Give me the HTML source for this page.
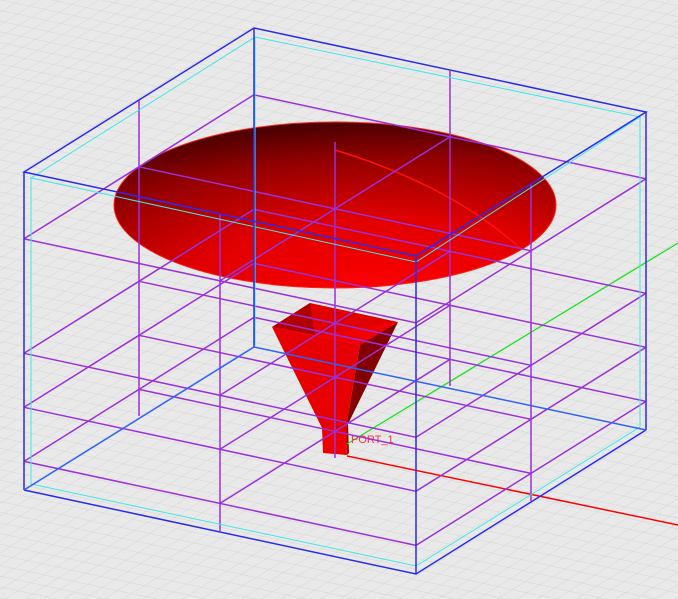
<!DOCTYPE html>
<html><head><meta charset="utf-8"><style>
html,body{margin:0;padding:0;background:#e9e9e9;}
svg{display:block}
</style></head><body>
<svg width="678" height="599" viewBox="0 0 678 599" xmlns="http://www.w3.org/2000/svg">
<defs>
<pattern id="grid" width="15" height="15" patternUnits="userSpaceOnUse" patternTransform="matrix(0.978 0.209 0.85 -0.53 0 0)">
<path d="M0 0H15M0 0V15" stroke="#d2d2d2" stroke-width="1.1" fill="none"/>
</pattern>
<radialGradient id="dish" cx="0.62" cy="1.05" r="1.05" fx="0.62" fy="1.05">
<stop offset="0" stop-color="#ff0000"/>
<stop offset="0.45" stop-color="#e00000"/>
<stop offset="0.8" stop-color="#900000"/>
<stop offset="1" stop-color="#4a0000"/>
</radialGradient>
<g id="lvl" fill="none" stroke="#9a30dc" stroke-width="1.5">
<path vector-effect="non-scaling-stroke" d="M0 0L1 0M0 .5L1 .5M0 1L1 1M0 0L0 1M.5 0L.5 1M1 0L1 1"/>
</g>
</defs>
<rect width="678" height="599" fill="#e9e9e9"/>
<rect width="678" height="599" fill="url(#grid)"/>

<ellipse cx="335" cy="205" rx="221" ry="83" fill="url(#dish)" stroke="#ff2020" stroke-width="1"/>
<path d="M335 150 Q450 185 520 248" stroke="#ff1010" stroke-width="1.5" fill="none"/>

<polygon points="310,303 398,322 360,345 272,327" fill="#e00000"/>
<polygon points="310,303 315,335 272,327" fill="#b00000"/>
<polygon points="315,335 398,322 360,345 272,327" fill="#f00000"/>
<polygon points="272,327 360,345 346,428 322,428" fill="#e60000"/>
<polygon points="360,345 398,322 348,424 346,428" fill="#820000"/>
<polygon points="322,428 346,428 347,455 323,453" fill="#ee0000"/>
<polygon points="346,428 348,424 349,453 347,455" fill="#a00000"/>

<line x1="347" y1="444" x2="678" y2="243" stroke="#20e020" stroke-width="1.3"/>
<line x1="347" y1="456" x2="678" y2="525" stroke="#ff0000" stroke-width="1.5"/>
<text x="351" y="443" font-family="Liberation Sans, sans-serif" font-size="11" fill="#ff3030">PORT_1</text>

<use href="#lvl" transform="translate(0,66.8) matrix(392 84 230 -144 24 172)"/>
<use href="#lvl" transform="translate(0,181.3) matrix(392 84 230 -144 24 172)"/>
<use href="#lvl" transform="translate(0,235.3) matrix(392 84 230 -144 24 172)"/>
<use href="#lvl" transform="translate(0,289.4) matrix(392 84 230 -144 24 172)"/>
<g stroke="#9a30dc" stroke-width="1.5" fill="none">
<path d="M220 214V531M531 184V501M139 100V416M450 71V386M335 142V458"/>
</g>

<g stroke="#40e8e8" stroke-width="1" fill="none">
<path d="M255 37L640 117L416 262L31 178Z"/>
<path d="M31 484L416 566L640 427"/>
<path d="M31 178V484M416 262V566M640 117V427M255 37V345"/>
</g>
<g stroke="#2a2af0" stroke-width="1.5" fill="none">
<path d="M254 28L646 112L416 256L24 172Z"/>
<path d="M24 490L416 574L646 430"/>
<path d="M24 172V490M416 256V574M646 112V430M254 28V347"/>
<path d="M254 347L24 490" stroke="#3060ff"/>
<path d="M254 347L646 430" stroke="#3060ff"/>
</g>
</svg>
</body></html>
